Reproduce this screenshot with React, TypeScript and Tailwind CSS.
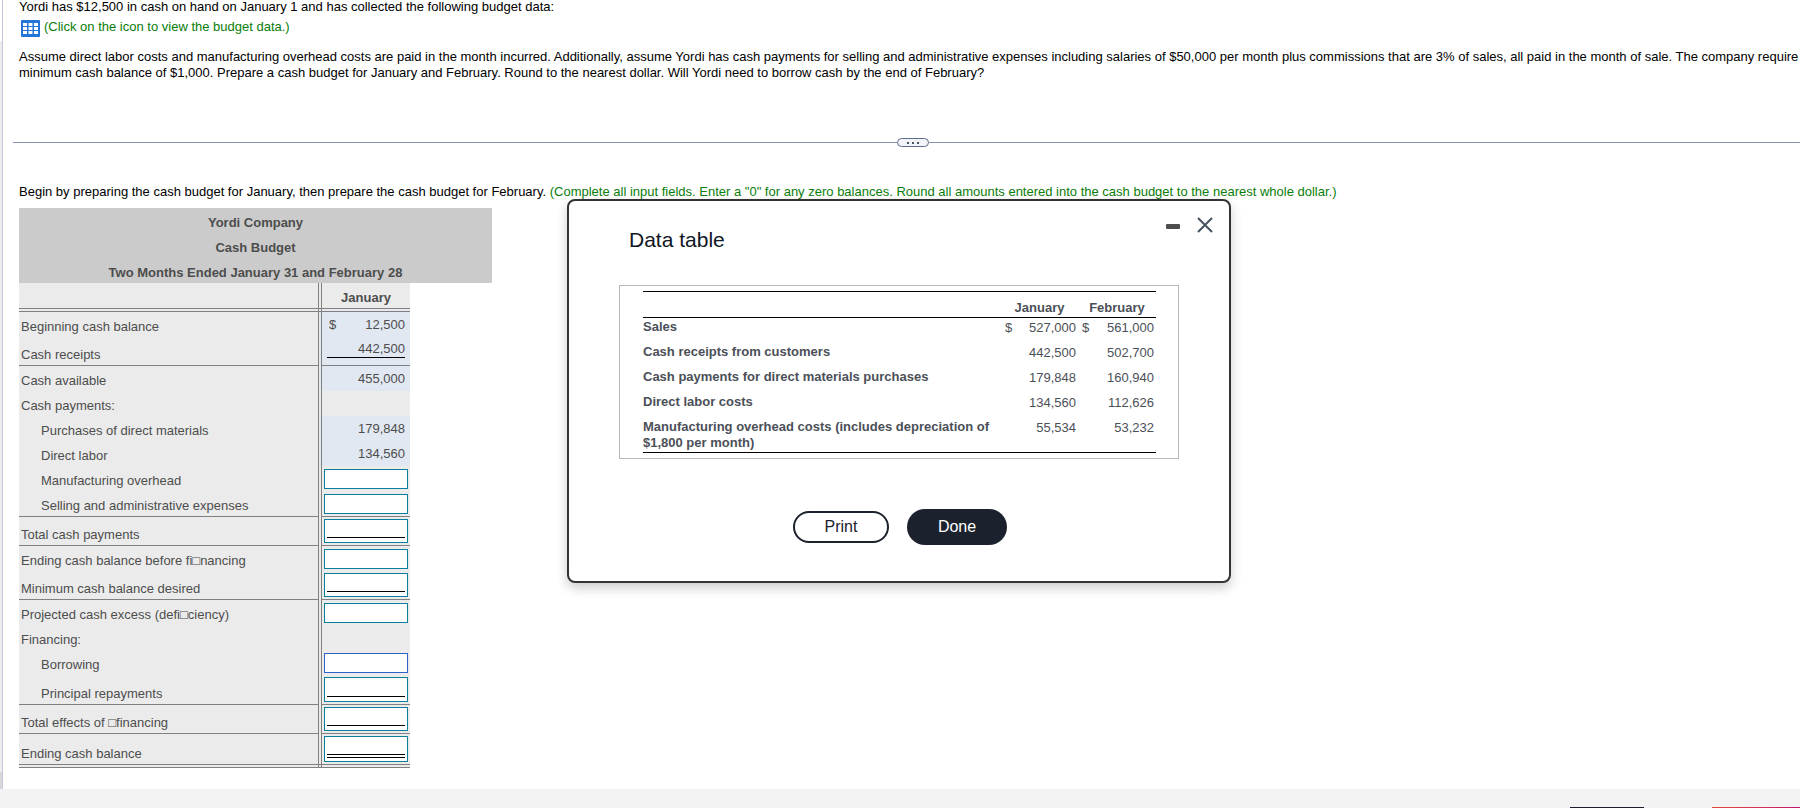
import { useState } from 'react';
import clsx from 'clsx';

type BudgetRow = {
  id: string;
  label: string;
  height: string;
  indent?: boolean;
  line?: 'single' | 'double';
  value?: string;
  dollar?: boolean;
  underlined?: boolean;
  input?: 'plain' | 'active' | 'total' | 'tall' | 'final';
};

const BUDGET_ROWS: BudgetRow[] = [
  { id: 'beginning', label: 'Beginning cash balance', height: 'h-[27px]', value: '12,500', dollar: true },
  { id: 'receipts', label: 'Cash receipts', height: 'h-[28px]', value: '442,500', underlined: true, line: 'single' },
  { id: 'available', label: 'Cash available', height: 'h-[26px]', value: '455,000' },
  { id: 'payments', label: 'Cash payments:', height: 'h-[25px]' },
  { id: 'materials', label: 'Purchases of direct materials', height: 'h-[25px]', indent: true, value: '179,848' },
  { id: 'labor', label: 'Direct labor', height: 'h-[25px]', indent: true, value: '134,560' },
  { id: 'overhead', label: 'Manufacturing overhead', height: 'h-[25px]', indent: true, input: 'plain' },
  { id: 'selling', label: 'Selling and administrative expenses', height: 'h-[25px]', indent: true, input: 'plain', line: 'single' },
  { id: 'total-payments', label: 'Total cash payments', height: 'h-[29px]', input: 'total', line: 'single' },
  { id: 'before-financing', label: 'Ending cash balance before fi□nancing', height: 'h-[26px]', input: 'plain' },
  { id: 'minimum', label: 'Minimum cash balance desired', height: 'h-[28px]', input: 'total', line: 'single' },
  { id: 'excess', label: 'Projected cash excess (defi□ciency)', height: 'h-[26px]', input: 'plain' },
  { id: 'financing', label: 'Financing:', height: 'h-[25px]' },
  { id: 'borrowing', label: 'Borrowing', height: 'h-[25px]', indent: true, input: 'active' },
  { id: 'repayments', label: 'Principal repayments', height: 'h-[29px]', indent: true, input: 'tall', line: 'single' },
  { id: 'effects', label: 'Total effects of □financing', height: 'h-[29px]', input: 'total', line: 'single' },
  { id: 'ending', label: 'Ending cash balance', height: 'h-[33px]', input: 'final', line: 'double' },
];

const DATA_ROWS = [
  { label: 'Sales', january: '527,000', february: '561,000', dollar: true },
  { label: 'Cash receipts from customers', january: '442,500', february: '502,700' },
  { label: 'Cash payments for direct materials purchases', january: '179,848', february: '160,940' },
  { label: 'Direct labor costs', january: '134,560', february: '112,626' },
  {
    label: 'Manufacturing overhead costs (includes depreciation of $1,800 per month)',
    january: '55,534',
    february: '53,232',
  },
];

function TableIcon() {
  return (
    <svg className="w-[19px] h-[17px]" viewBox="0 0 19 17" aria-hidden="true">
      <rect width="19" height="17" rx="1" fill="#2375d8" />
      {[2, 7.5, 13].map(x =>
        [3, 7, 11].map(y => <rect key={`${x}-${y}`} x={x} y={y} width="4" height="3" fill="#fff" />)
      )}
    </svg>
  );
}

function BudgetCell({ row, amount, onChange }: { row: BudgetRow; amount: string; onChange: (v: string) => void }) {
  if (row.value) {
    return (
      <div className={clsx('mx-[5px] flex justify-between leading-4', row.underlined ? 'border-b border-black pt-1' : 'pt-[5px]')}>
        <span className="pl-0.5">{row.dollar ? '$' : ''}</span>
        <span>{row.value}</span>
      </div>
    );
  }
  if (!row.input) return null;

  const ruled = row.input === 'total' || row.input === 'tall' || row.input === 'final';
  return (
    <div
      className={clsx(
        'mx-0.5 border bg-white px-0.5',
        row.input === 'active' ? 'border-[#2d63c8]' : 'border-[#0a7f9c]',
        !ruled && 'mt-[3px] h-5',
        ruled && 'mt-0.5',
        row.input === 'total' && 'h-6',
        row.input === 'tall' && 'h-[25px]',
        row.input === 'final' && 'h-[26px]'
      )}
    >
      <input
        id={row.id}
        type="text"
        value={amount}
        onChange={e => onChange(e.target.value)}
        className={clsx(
          'block w-full bg-transparent text-right focus:outline-none',
          !ruled && 'h-4',
          row.input === 'total' && 'h-[18px] border-b border-black',
          row.input === 'tall' && 'h-[19px] border-b border-black',
          row.input === 'final' && 'h-[21px] border-b-4 border-double border-black'
        )}
      />
    </div>
  );
}

function CashBudget() {
  const [amounts, setAmounts] = useState<Record<string, string>>({});

  return (
    <div className="text-[13px] leading-[15px] text-[#4d4d4d]">
      <div className="w-[473px] bg-[#cbcbcb] text-center font-bold leading-[25px] pt-0.5 h-[75px]">
        <div>Yordi Company</div>
        <div>Cash Budget</div>
        <div>Two Months Ended January 31 and February 28</div>
      </div>
      <table className="w-[391px] table-fixed border-collapse bg-[#ebebeb]">
        <colgroup>
          <col className="w-[301px]" />
          <col className="w-[90px]" />
        </colgroup>
        <thead>
          <tr>
            <td className="h-[27px] border-r-4 border-b-4 border-double border-[#808080] p-0" />
            <th scope="col" className="h-[27px] border-b-4 border-double border-[#808080] p-0 pb-[3px] align-bottom">
              January
            </th>
          </tr>
        </thead>
        <tbody>
          {BUDGET_ROWS.map(row => {
            const line =
              row.line === 'single' ? 'border-b border-b-[#808080] [border-bottom-style:solid]'
              : row.line === 'double' ? 'border-b-4 border-b-[#808080] [border-bottom-style:double]'
              : '';
            return (
              <tr key={row.id}>
                <td
                  className={clsx(
                    row.height, line,
                    'border-r-4 border-r-[#808080] [border-right-style:double] p-0 pb-[3px] align-bottom',
                    row.indent ? 'pl-[22px]' : 'pl-0.5'
                  )}
                >
                  {row.input ? <label htmlFor={row.id}>{row.label}</label> : row.label}
                </td>
                <td className={clsx(row.height, line, 'p-0 align-top', row.value && 'bg-[#e1e8f2]')}>
                  <BudgetCell
                    row={row}
                    amount={amounts[row.id] ?? ''}
                    onChange={v => setAmounts(p => ({ ...p, [row.id]: v }))}
                  />
                </td>
              </tr>
            );
          })}
        </tbody>
      </table>
    </div>
  );
}

function DataTableDialog({ onClose }: { onClose: () => void }) {
  return (
    <div
      role="dialog"
      aria-labelledby="data-table-title"
      className="absolute top-[199px] left-[567px] w-[664px] rounded-lg border-2 border-[#333] bg-white px-[50px] pt-[15px] pb-9 shadow-[0_5px_12px_rgba(0,0,0,0.2)]"
    >
      <div className="flex items-start justify-between">
        <h2 id="data-table-title" className="pt-[10px] pl-[10px] text-[21px] leading-7 text-[#0f1624]">Data table</h2>
        <div className="-mr-[34px] flex items-center gap-[17px] pt-px">
          <button type="button" aria-label="Minimize" className="flex h-4 w-[14px] items-center">
            <span className="mt-0.5 h-[5px] w-[14px] rounded-[1px] bg-[#4d4d4d]" />
          </button>
          <button type="button" aria-label="Close" onClick={onClose} className="h-4 w-4">
            <svg viewBox="0 0 16 16" className="h-4 w-4" fill="none" stroke="#46525e" strokeWidth="2">
              <path d="M1 1l14 14M15 1L1 15" />
            </svg>
          </button>
        </div>
      </div>

      <div className="mt-[31px] border border-[#b8b8b8] pt-[5px] pr-[22px] pb-[5px] pl-[23px]">
        <table className="w-full table-fixed border-collapse text-[13px] leading-4 text-[#4b5058]">
          <colgroup>
            <col />
            <col className="w-[77px]" />
            <col className="w-[78px]" />
          </colgroup>
          <thead>
            <tr className="h-[26px] border-y border-black align-bottom">
              <td />
              <th scope="col" className="p-0 pb-px">January</th>
              <th scope="col" className="p-0 pb-px">February</th>
            </tr>
          </thead>
          <tbody className="border-b border-black">
            {DATA_ROWS.map(row => (
              <tr key={row.label} className="h-[25px] align-top">
                <th scope="row" className="p-0 py-px text-left">{row.label}</th>
                {[row.january, row.february].map(value => (
                  <td key={value} className="p-0 pt-0.5">
                    <div className="flex justify-between pr-0.5 pl-1">
                      <span>{row.dollar ? '$' : ''}</span>
                      <span>{value}</span>
                    </div>
                  </td>
                ))}
              </tr>
            ))}
          </tbody>
        </table>
      </div>

      <div className="mt-[50px] flex items-center justify-center gap-[18px] pl-0.5 text-base">
        <button type="button" className="h-8 w-24 rounded-full border-2 border-[#1c222d] leading-4 text-[#1c222d]">Print</button>
        <button type="button" onClick={onClose} className="h-9 w-[100px] rounded-full bg-[#1c222d] leading-4 text-white">Done</button>
      </div>
    </div>
  );
}

export default function App() {
  const [open, setOpen] = useState(true);

  return (
    <div className="relative flex min-h-screen flex-col overflow-hidden bg-white font-['Liberation_Sans',Arial,sans-serif] text-[13px] leading-4 text-black">
      <div className="flex">
        {/* Edge of the collapsed side panel */}
        <div className="flex w-[3px] shrink-0 flex-col border-r border-[#c3c8dc] pt-[41px]">
          <div className="flex-1 bg-[#ededed]" />
          <div className="h-[17px] bg-[#d8d8d8]" />
        </div>

        <main className="min-w-0 flex-1 pb-[21px] pl-4">
          <p className="-mt-px">Yordi has $12,500 in cash on hand on January 1 and has collected the following budget data:</p>
          <button type="button" onClick={() => setOpen(true)} className="mt-1 flex items-start gap-1 pl-0.5 text-[#0a7d0a]">
            <span className="pt-px"><TableIcon /></span>
            <span>(Click on the icon to view the budget data.)</span>
          </button>

          <p className="mt-3 whitespace-nowrap">
            Assume direct labor costs and manufacturing overhead costs are paid in the month incurred. Additionally, assume Yordi has cash payments for selling and administrative expenses including salaries of $50,000 per month plus commissions that are 3% of sales, all paid in the month of sale. The company require
            <br />
            minimum cash balance of $1,000. Prepare a cash budget for January and February. Round to the nearest dollar. Will Yordi need to borrow cash by the end of February?
          </p>

          <div className="mt-[57px] -mr-3 -ml-[6px] flex items-center">
            <div className="h-px flex-1 bg-[#8a93ad]" />
            <button type="button" aria-label="Resize panels" className="flex h-[9px] w-8 items-center justify-center gap-[3px] rounded-full border border-[#5f6d8c] bg-[#f2f4f7]">
              <span className="size-0.5 bg-[#4a5266]" />
              <span className="size-0.5 bg-[#4a5266]" />
              <span className="size-0.5 bg-[#4a5266]" />
            </button>
            <div className="h-px flex-1 bg-[#8a93ad]" />
          </div>

          <p className="mt-[37px] mb-2">
            Begin by preparing the cash budget for January, then prepare the cash budget for February.{' '}
            <span className="text-[#0a7d0a]">(Complete all input fields. Enter a "0" for any zero balances. Round all amounts entered into the cash budget to the nearest whole dollar.)</span>
          </p>

          <CashBudget />
        </main>
      </div>

      <footer className="flex flex-1 items-end justify-end gap-[68px] bg-[#f3f3f3]">
        <div className="h-px w-[74px] bg-[#1c1a2b]" />
        <div className="h-px w-[88px] bg-linear-to-r from-[#e0483a] to-[#c4126b]" />
      </footer>

      {open && <DataTableDialog onClose={() => setOpen(false)} />}
    </div>
  );
}
